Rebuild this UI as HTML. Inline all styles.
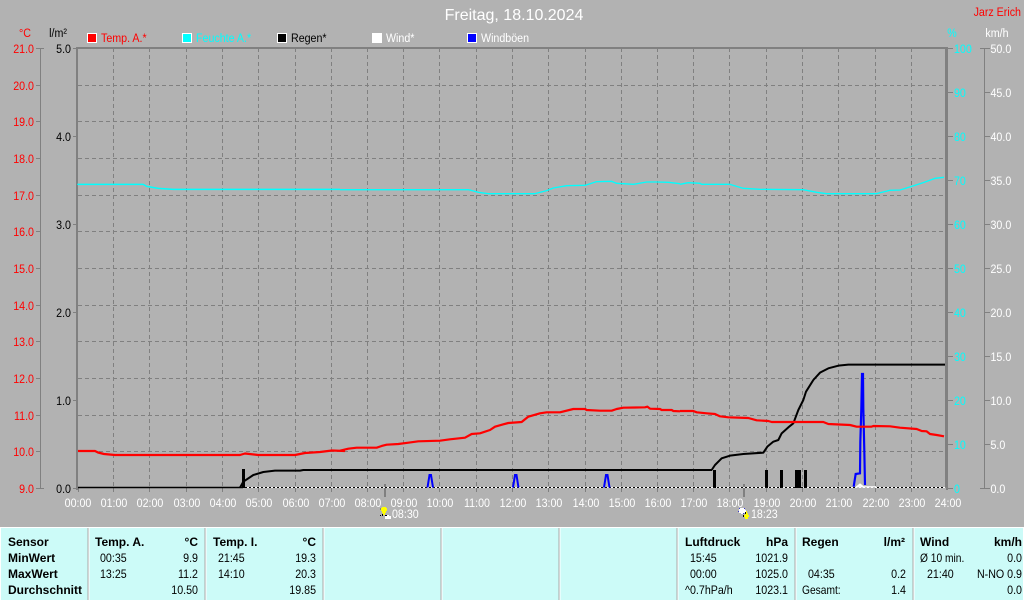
<!DOCTYPE html>
<html>
<head>
<meta charset="utf-8">
<title>Freitag, 18.10.2024</title>
<style>
html,body{margin:0;padding:0;background:#b2b2b2;width:1024px;height:600px;overflow:hidden}
svg{display:block}
text{font-family:"Liberation Sans",sans-serif;font-size:12px;transform-box:fill-box;transform:scaleX(.89);transform-origin:0 50%}
.r{text-anchor:end;transform-origin:100% 50%}
.m{text-anchor:middle;transform-origin:50% 50%}
.red{fill:#f00}.cy{fill:#0ff}.wh{fill:#fff}.bk{fill:#000}
.b{font-weight:bold;font-size:12px;fill:#000;transform:none}
.t{fill:#000}
</style>
</head>
<body>
<svg width="1024" height="600" viewBox="0 0 1024 600" xmlns="http://www.w3.org/2000/svg">
<rect width="1024" height="600" fill="#b2b2b2"/>

<text x="514" y="20" class="m wh" style="font-size:16px;transform:none">Freitag, 18.10.2024</text>
<text x="1021" y="16" class="r red">Jarz Erich</text>

<!-- legend -->
<g stroke="#fff" stroke-width="1">
<rect x="87.5" y="33.5" width="9" height="9" fill="#f00"/>
<rect x="182.5" y="33.5" width="9" height="9" fill="#0ff"/>
<rect x="277.5" y="33.5" width="9" height="9" fill="#000"/>
<rect x="372.5" y="33.5" width="9" height="9" fill="#fff"/>
<rect x="467.5" y="33.5" width="9" height="9" fill="#00f"/>
</g>
<text x="101" y="42" class="red">Temp. A.*</text>
<text x="196" y="42" class="cy">Feuchte A.*</text>
<text x="291" y="42" class="bk">Regen*</text>
<text x="386" y="42" class="wh">Wind*</text>
<text x="481" y="42" class="wh">Windböen</text>

<text x="25" y="37" class="m red">°C</text>
<text x="58" y="37" class="m bk">l/m²</text>
<text x="952" y="37" class="m cy">%</text>
<text x="997" y="37" class="m wh">km/h</text>

<!-- grid -->
<g stroke="#808080" stroke-width="1" fill="none" stroke-dasharray="4,3" shape-rendering="crispEdges">
<path d="M113.5 48V488M149.5 48V488M186.5 48V488M222.5 48V488M258.5 48V488M295.5 48V488M331.5 48V488M367.5 48V488M403.5 48V488M439.5 48V488M476.5 48V488M512.5 48V488M548.5 48V488M585.5 48V488M621.5 48V488M657.5 48V488M693.5 48V488M729.5 48V488M766.5 48V488M802.5 48V488M838.5 48V488M875.5 48V488M911.5 48V488"/>
<path d="M78 85.5H945M78 121.5H945M78 158.5H945M78 195.5H945M78 231.5H945M78 268.5H945M78 305.5H945M78 341.5H945M78 378.5H945M78 415.5H945M78 451.5H945"/>
</g>
<!-- ticks and axes -->
<g stroke="#808080" stroke-width="1" fill="none" shape-rendering="crispEdges">
<path d="M78.5 488V492M113.5 488V492M149.5 488V492M186.5 488V492M222.5 488V492M258.5 488V492M295.5 488V492M331.5 488V492M367.5 488V492M403.5 488V492M439.5 488V492M476.5 488V492M512.5 488V492M548.5 488V492M585.5 488V492M621.5 488V492M657.5 488V492M693.5 488V492M729.5 488V492M766.5 488V492M802.5 488V492M838.5 488V492M875.5 488V492M911.5 488V492"/>
<path d="M40.5 48V488M36 48.5H44M36 85.5H40M36 121.5H40M36 158.5H40M36 195.5H40M36 231.5H40M36 268.5H40M36 305.5H40M36 341.5H40M36 378.5H40M36 415.5H40M36 451.5H40M36 488.5H44"/>
<path d="M73 48.5H77M73 136.5H77M73 224.5H77M73 312.5H77M73 400.5H77M73 488.5H77"/>
<path d="M945.5 48V488"/>
<path d="M948 48.5H953M948 92.5H953M948 136.5H953M948 180.5H953M948 224.5H953M948 268.5H953M948 312.5H953M948 356.5H953M948 400.5H953M948 444.5H953M948 488.5H953"/>
<path d="M984.5 48V488M980 48.5H990M985 92.5H990M985 136.5H990M985 180.5H990M985 224.5H990M985 268.5H990M985 312.5H990M985 356.5H990M985 400.5H990M985 444.5H990M980 488.5H990"/>
</g>
<g fill="#808080" shape-rendering="crispEdges">
<rect x="77" y="47" width="870" height="2"/>
<rect x="76" y="47" width="2" height="443"/>
<rect x="946" y="47" width="2" height="443"/>
<rect x="384" y="484" width="2" height="13"/>
<rect x="743" y="484" width="2" height="13"/>
</g>

<!-- axis labels -->
<text x="34" y="53" class="r red">21.0</text>
<text x="34" y="90" class="r red">20.0</text>
<text x="34" y="126" class="r red">19.0</text>
<text x="34" y="163" class="r red">18.0</text>
<text x="34" y="200" class="r red">17.0</text>
<text x="34" y="236" class="r red">16.0</text>
<text x="34" y="273" class="r red">15.0</text>
<text x="34" y="310" class="r red">14.0</text>
<text x="34" y="346" class="r red">13.0</text>
<text x="34" y="383" class="r red">12.0</text>
<text x="34" y="420" class="r red">11.0</text>
<text x="34" y="456" class="r red">10.0</text>
<text x="34" y="493" class="r red">9.0</text>

<text x="71" y="53" class="r bk">5.0</text>
<text x="71" y="141" class="r bk">4.0</text>
<text x="71" y="229" class="r bk">3.0</text>
<text x="71" y="317" class="r bk">2.0</text>
<text x="71" y="405" class="r bk">1.0</text>
<text x="71" y="493" class="r bk">0.0</text>

<text x="954" y="53" class="cy">100</text>
<text x="954" y="97" class="cy">90</text>
<text x="954" y="141" class="cy">80</text>
<text x="954" y="185" class="cy">70</text>
<text x="954" y="229" class="cy">60</text>
<text x="954" y="273" class="cy">50</text>
<text x="954" y="317" class="cy">40</text>
<text x="954" y="361" class="cy">30</text>
<text x="954" y="405" class="cy">20</text>
<text x="954" y="449" class="cy">10</text>
<text x="954" y="493" class="cy">0</text>

<text x="990.5" y="53" class="wh">50.0</text>
<text x="990.5" y="97" class="wh">45.0</text>
<text x="990.5" y="141" class="wh">40.0</text>
<text x="990.5" y="185" class="wh">35.0</text>
<text x="990.5" y="229" class="wh">30.0</text>
<text x="990.5" y="273" class="wh">25.0</text>
<text x="990.5" y="317" class="wh">20.0</text>
<text x="990.5" y="361" class="wh">15.0</text>
<text x="990.5" y="405" class="wh">10.0</text>
<text x="990.5" y="449" class="wh">5.0</text>
<text x="990.5" y="493" class="wh">0.0</text>

<text x="78" y="507" class="m wh">00:00</text><text x="114" y="507" class="m wh">01:00</text><text x="150" y="507" class="m wh">02:00</text><text x="187" y="507" class="m wh">03:00</text><text x="223" y="507" class="m wh">04:00</text><text x="259" y="507" class="m wh">05:00</text><text x="296" y="507" class="m wh">06:00</text><text x="332" y="507" class="m wh">07:00</text><text x="368" y="507" class="m wh">08:00</text><text x="404" y="507" class="m wh">09:00</text><text x="440" y="507" class="m wh">10:00</text><text x="477" y="507" class="m wh">11:00</text><text x="513" y="507" class="m wh">12:00</text><text x="549" y="507" class="m wh">13:00</text><text x="586" y="507" class="m wh">14:00</text><text x="622" y="507" class="m wh">15:00</text><text x="658" y="507" class="m wh">16:00</text><text x="694" y="507" class="m wh">17:00</text><text x="730" y="507" class="m wh">18:00</text><text x="767" y="507" class="m wh">19:00</text><text x="803" y="507" class="m wh">20:00</text><text x="839" y="507" class="m wh">21:00</text><text x="876" y="507" class="m wh">22:00</text><text x="912" y="507" class="m wh">23:00</text><text x="948" y="507" class="m wh">24:00</text>
<text x="392" y="518" class="wh">08:30</text>
<text x="751" y="518" class="wh">18:23</text>

<!-- sun icons -->
<g shape-rendering="crispEdges">
<rect x="380" y="508" width="2" height="2" fill="#808080"/>
<path d="M382 507h4v1h1v3h-1v2h-1v2h-2v-2h-1v-2h-1v-3h1z" fill="#ff0"/>
<path d="M382 514h1v2h-1zM380 515h1v1h-1zM385 515h2v1h-2z" fill="#000"/>
<rect x="385" y="516" width="6" height="3" fill="#fff"/>
<rect x="387" y="515" width="2" height="1" fill="#fff"/>
<path d="M739 508h6v2h1v3h-2v1h-3v-1h-2z" fill="#fff"/>
<path d="M739 508h1v1h-1zM744 508h1v1h-1zM738 511h1v1h-1zM743 513h1v1h-1z" fill="#3a3ad0"/>
<path d="M746 511h1v2h1v2h1v2h-1v2h-3v-2h-1v-2h1v-2h1z" fill="#ff0"/>
<path d="M745 512h1v2h-1zM743 515h1v2h-1z" fill="#000"/>
</g>

<!-- baseline dotted -->
<path d="M245 487.5H945" stroke="#fff" stroke-width="1" fill="none" shape-rendering="crispEdges"/>
<path d="M245 487.5H945" stroke="#000" stroke-width="1" stroke-dasharray="2,2" fill="none" shape-rendering="crispEdges"/>

<!-- humidity -->
<g fill="none" stroke="#0ff" stroke-linejoin="round">
<polyline transform="scale(.33333)" stroke-width="4.5" points="232,553 430,553 440,559 475,565 520,568 1020,568"/>
<polyline transform="translate(340,0) scale(.33333)" stroke-width="4" points="0,569 385,569 415,577 445,581 585,581 620,572 640,564 680,557 735,556 770,545 815,544 830,550 880,553 920,546 950,546 985,547 1020,551"/>
<polyline transform="translate(680,0) scale(.33333)" stroke-width="4" points="0,553 25,548 60,550 65,553 150,553 190,565 240,568 370,569 410,577 440,581 590,581 630,571 660,570 695,559 730,548 765,535 792,532"/>
</g>

<!-- rain -->
<g fill="none" stroke="#000" stroke-linejoin="round">
<path d="M78 487.5H243" stroke-width="1.6"/>
<polyline transform="translate(0,430) scale(.33333)" stroke-width="6" points="720,173 730,155 760,135 790,126 825,122 900,122 910,120 1020,120"/>
<path d="M340 470H712" stroke-width="2"/>
<polyline transform="translate(680,350) scale(.33333)" stroke-width="6" points="95,360 105,345 125,325 150,317 190,312 250,308 262,290 280,275 295,270 305,250 325,232 340,220 355,180 370,150 378,125 400,90 420,68 445,55 475,47 505,44 795,44"/>
</g>
<g fill="#000" shape-rendering="crispEdges">
<rect x="242" y="469" width="3" height="19"/>
<rect x="713" y="470" width="3" height="18"/>
<rect x="765" y="470" width="3" height="18"/>
<rect x="780" y="470" width="3" height="18"/>
<rect x="795" y="470" width="6" height="18"/>
<rect x="804" y="470" width="3" height="18"/>
</g>

<!-- wind -->
<path d="M856 487H876" stroke="#fff" stroke-width="1.5" fill="none"/>
<path d="M857 487L860 484.5L863 487" stroke="#fff" stroke-width="2" fill="none"/>

<!-- gusts -->
<g fill="none" stroke="#00f" stroke-width="2" stroke-linejoin="miter">
<path d="M427.5 487.5L429.5 475H431L433 487.5"/>
<path d="M513 487.5L515 475H516.5L518.5 487.5"/>
<path d="M604 487.5L606 475H607.5L609.5 487.5"/>
<polyline transform="translate(680,350) scale(.33333)" stroke-width="6.5" points="521,410 527,372 540,370 541,275 544,175 546,72 549,72 550,175 553,305 555,405"/>
</g>

<!-- temperature -->
<g fill="none" stroke="#f00" stroke-linejoin="round">
<polyline stroke-width="2.2" points="78,451 95,451 98,452.5 104,454 115,455 240,455 245,453.5 258,455 295,455 305,453 320,452 332,450.5 345,451"/>
<polyline transform="translate(340,400) scale(.33333)" stroke-width="6.6" points="0,152 25,146 50,143 110,143 125,138 140,134 175,132 205,128 235,124 300,122 330,118 375,113 395,102 420,100 450,90 465,80 490,73 505,69 545,66 565,50 600,40 620,37 660,37 700,27 735,27 740,30 780,32 815,32 830,27 850,23 915,22 922,20 930,26 960,27 965,30 995,30 1000,33 1020,34"/>
<polyline transform="translate(680,350) scale(.33333)" stroke-width="6.6" points="0,183 40,183 50,187 80,190 105,192 120,199 145,202 205,204 230,211 265,213 275,216 430,216 445,222 510,225 530,230 575,230 580,228 630,229 660,233 710,237 725,243 740,244 750,252 770,255 792,259"/>
</g>

<!-- table -->
<rect x="0" y="527" width="1024" height="73" fill="#fff" shape-rendering="crispEdges"/>
<rect x="1" y="528" width="1022" height="72" fill="#ccfbf8" shape-rendering="crispEdges"/>
<g shape-rendering="crispEdges">
<path d="M88 528v72M205 528v72M323 528v72M441 528v72M559 528v72M677 528v72M795 528v72M913 528v72" stroke="#a8a8a8" stroke-width="1" fill="none"/>
<path d="M89 528v72M206 528v72M324 528v72M442 528v72M560 528v72M678 528v72M796 528v72M914 528v72" stroke="#fff" stroke-width="1" fill="none"/>
</g>

<text x="8" y="546" class="b">Sensor</text>
<text x="8" y="562" class="b">MinWert</text>
<text x="8" y="578" class="b">MaxWert</text>
<text x="8" y="594" class="b">Durchschnitt</text>

<text x="95" y="546" class="b">Temp. A.</text>
<text x="198" y="546" class="b r">°C</text>
<text x="100" y="562" class="t">00:35</text>
<text x="198" y="562" class="t r">9.9</text>
<text x="100" y="578" class="t">13:25</text>
<text x="198" y="578" class="t r">11.2</text>
<text x="198" y="594" class="t r">10.50</text>

<text x="213" y="546" class="b">Temp. I.</text>
<text x="316" y="546" class="b r">°C</text>
<text x="218" y="562" class="t">21:45</text>
<text x="316" y="562" class="t r">19.3</text>
<text x="218" y="578" class="t">14:10</text>
<text x="316" y="578" class="t r">20.3</text>
<text x="316" y="594" class="t r">19.85</text>

<text x="685" y="546" class="b">Luftdruck</text>
<text x="788" y="546" class="b r">hPa</text>
<text x="690" y="562" class="t">15:45</text>
<text x="788" y="562" class="t r">1021.9</text>
<text x="690" y="578" class="t">00:00</text>
<text x="788" y="578" class="t r">1025.0</text>
<text x="685" y="594" class="t">^0.7hPa/h</text>
<text x="788" y="594" class="t r">1023.1</text>

<text x="802" y="546" class="b">Regen</text>
<text x="905" y="546" class="b r">l/m²</text>
<text x="808" y="578" class="t">04:35</text>
<text x="906" y="578" class="t r">0.2</text>
<text x="802" y="594" class="t" style="font-size:11.5px">Gesamt:</text>
<text x="906" y="594" class="t r">1.4</text>

<text x="920" y="546" class="b">Wind</text>
<text x="1022" y="546" class="b r">km/h</text>
<text x="920" y="562" class="t" style="font-size:11.5px">Ø 10 min.</text>
<text x="1022" y="562" class="t r">0.0</text>
<text x="927" y="578" class="t">21:40</text>
<text x="1022" y="578" class="t r">N-NO 0.9</text>
<text x="1022" y="594" class="t r">0.0</text>
</svg>
</body>
</html>
